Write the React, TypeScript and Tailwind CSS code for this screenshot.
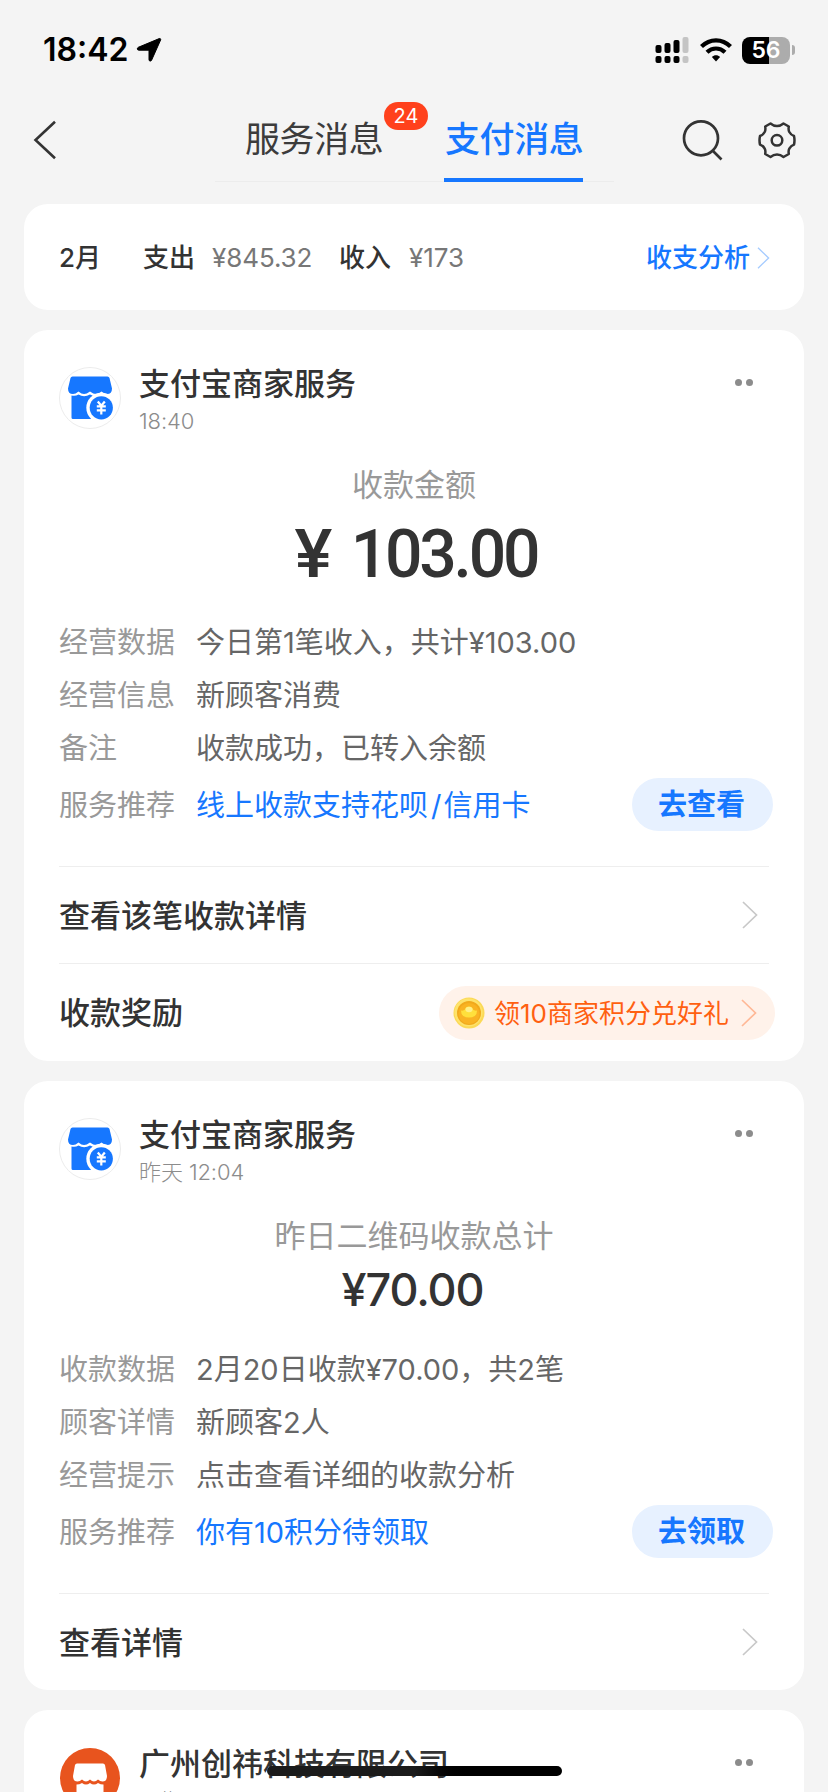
import React from 'react';

type Row = { label: string; value: React.ReactNode; action?: string };

const paymentRows: Row[] = [
  { label: '经营数据', value: '今日第1笔收入，共计¥103.00' },
  { label: '经营信息', value: '新顾客消费' },
  { label: '备注', value: '收款成功，已转入余额' },
  {
    label: '服务推荐',
    value: (
      <>
        线上收款支持花呗<span className="mr-[2px] ml-[3px]">/</span>信用卡
      </>
    ),
    action: '去查看',
  },
];

const dailyRows: Row[] = [
  { label: '收款数据', value: '2月20日收款¥70.00，共2笔' },
  { label: '顾客详情', value: '新顾客2人' },
  { label: '经营提示', value: '点击查看详细的收款分析' },
  { label: '服务推荐', value: '你有10积分待领取', action: '去领取' },
];

const Chevron = ({ className }: { className: string }) => (
  <svg viewBox="0 0 16 28" fill="none" stroke="currentColor" strokeWidth="1.7" className={className}>
    <path d="M1 1L14.5 14L1 27" />
  </svg>
);

const StatusBar = () => (
  <div className="flex h-[100px] items-center justify-between pl-[43px] pr-[33px]">
    <div className="flex items-center">
      <span className="w-[86px] text-[32px] leading-none font-semibold text-black">18:42</span>
      <svg viewBox="0 0 26 26" className="ml-[7px] h-[26px] w-[26px]">
        <path
          d="M23.2 1.6C24.2 1.2 25 2 24.6 3L15.6 23.2C15 24.6 13 24.3 13 22.8V13.2H2.8C1 13.2.8 10.9 2.3 10.3Z"
          fill="#000"
          stroke="#000"
          strokeLinejoin="round"
        />
      </svg>
    </div>
    <div className="flex items-center">
      <svg viewBox="0 0 34 28" className="h-7 w-[34px]">
        <g fill="#000">
          <rect x="0.5" y="9" width="6" height="8" rx="2" />
          <rect x="9.5" y="7" width="6" height="10" rx="2" />
          <rect x="18.5" y="4" width="6" height="13" rx="2" />
          <rect x="0.5" y="20" width="6" height="7" rx="2" />
          <rect x="9.5" y="20" width="6" height="7" rx="2" />
          <rect x="18.5" y="20" width="6" height="7" rx="2" />
        </g>
        <g fill="#c4c4c4">
          <rect x="27.5" y="1" width="6" height="16" rx="2" />
          <rect x="27.5" y="20" width="6" height="7" rx="2" />
        </g>
      </svg>
      <svg viewBox="0 0 32 24" fill="none" stroke="#000" strokeWidth="4.2" className="ml-[11px] h-6 w-8">
        <path d="M1.5 8.6C9.8.3 22.2.3 30.5 8.6" />
        <path d="M7 14.3C12.2 9.2 19.8 9.2 25 14.3" />
        <path d="M11.9 18.9C14.2 16.6 17.8 16.6 20.1 18.9L16 23.4Z" fill="#000" stroke="none" />
      </svg>
      <div className="ml-[10px] flex items-center">
        <div className="flex h-[27px] w-12 items-center justify-center rounded-[8px] bg-linear-to-r from-black from-56% to-[#acacac] to-56%">
          <span className="text-[23px] leading-none font-semibold text-white">56</span>
        </div>
        <div className="ml-[2px] h-[10px] w-[3px] rounded-r-full bg-[#acacac]" />
      </div>
    </div>
  </div>
);

const Header = () => (
  <div className="flex h-[104px] items-start pl-[33px]">
    <svg viewBox="0 0 24 40" fill="none" stroke="#333" strokeWidth="2.6" className="mt-5 h-10 w-6">
      <path d="M22 1.8L2.5 20L22 38.2" />
    </svg>
    <div className="ml-[158px] flex h-[82px] w-[399px] border-b border-[#ececec] pl-[30px] whitespace-nowrap">
      <div className="relative w-[140px] pt-[16px] text-[35px] leading-[46px] tracking-[-0.4px] text-[#3c3c3c]">
        服务消息
        <span className="absolute top-[2px] left-[139px] flex h-7 w-11 items-center justify-center rounded-full bg-[#ff411c] text-[20px] leading-none tracking-normal text-white">
          24
        </span>
      </div>
      <div className="ml-[59px] h-[82px] w-[139px] border-b-4 border-[#1677ff] pt-[16px] pl-px text-[35px] leading-[46px] font-medium tracking-[-0.4px] text-[#1677ff]">
        支付消息
      </div>
    </div>
    <svg viewBox="0 0 42 42" fill="none" stroke="#333" strokeWidth="2.7" className="mt-[19px] ml-[68px] h-[42px] w-[42px]">
      <circle cx="19" cy="19.3" r="17" />
      <path d="M30.5 31.5L39.5 40.5" />
    </svg>
    <svg viewBox="0 0 40 40" fill="none" stroke="#333" strokeWidth="2.5" strokeLinejoin="round" className="mt-5 ml-[33px] h-10 w-10">
      <path d="M13.5 3.5Q16.5 6 20 6Q23.500 6 26.500 3.500L31.800 6.500Q31.200 10 32.300 12Q34 15 37 16Q38 20.300 37 24.600Q34 25.600 32.300 28.600Q31.200 30.600 31.800 34L26.500 37Q23.500 34.600 20 34.600Q16.500 34.600 13.500 37L8.200 34Q8.800 30.600 7.700 28.600Q6 25.600 3 24.600Q2 20.300 3 16Q6 15 7.700 12Q8.800 10 8.200 6.500Z" />
      <circle cx="20" cy="20.3" r="5.3" />
    </svg>
  </div>
);

const Summary = () => (
  <div className="flex h-[106px] items-center rounded-3xl bg-white pt-[2px] pr-[34px] pl-[35px] text-[26px] leading-none text-[#333]">
    <span className="w-[84px] font-medium">2月</span>
    <span className="font-medium">支出</span>
    <span className="ml-[17px] w-[110px] tracking-[-0.1px] text-[#777]">¥845.32</span>
    <span className="ml-[17px] font-medium">收入</span>
    <span className="ml-[18px] tracking-[-0.1px] text-[#777]">¥173</span>
    <span className="ml-auto font-medium text-[#1677ff]">收支分析</span>
    <Chevron className="ml-[7px] h-[22px] w-[13px] text-[#a5cbff]" />
  </div>
);

const ShopAvatar = () => (
  <svg viewBox="0 0 62 62" className="h-[62px] w-[62px] shrink-0">
    <circle cx="31" cy="31" r="30.5" fill="#fff" stroke="#ececec" />
    <path
      d="M13.5 9.5H48.5Q50 9.5 50.5 11L53 21.5Q53 27 48 27Q45.5 27 42.5 24.5Q39.5 27 37 27Q34.5 27 31 24.5Q27.5 27 25 27Q22.5 27 19.5 24.5Q16.5 27 14 27Q9 27 9 21.5L11.5 11Q12 9.5 13.5 9.5Z"
      fill="#1677ff"
    />
    <path d="M12.5 28.5Q16.5 29.5 19.5 27.5Q25 31 31 27.5Q37 31 42.5 27.5Q46 29.5 49.5 28.5V52H14Q12.5 52 12.5 50.5Z" fill="#1677ff" />
    <circle cx="42.3" cy="40.8" r="15" fill="#fff" />
    <circle cx="42.3" cy="40.8" r="11.6" fill="#1677ff" />
    <path d="M38.8 34.5L42.3 38.8L45.8 34.5M42.3 38.5V47.5M37.8 39.3H46.8M37.8 43.3H46.8" fill="none" stroke="#fff" strokeWidth="2.2" />
  </svg>
);

const CompanyAvatar = () => (
  <svg viewBox="0 0 62 62" className="h-[62px] w-[62px] shrink-0">
    <circle cx="31" cy="31" r="30" fill="#e8541e" />
    <path
      d="M18 16.5H44Q45.5 16.5 46 18L48 29Q48 34.5 43.5 34.5Q41 34.5 39 32.5Q37 34.5 35 34.5Q33 34.5 31 32.5Q29 34.5 27 34.5Q25 34.5 23 32.5Q21 34.5 18.5 34.5Q14 34.5 14 29L16 18Q16.5 16.5 18 16.5Z"
      fill="#fff"
    />
    <path d="M17.5 37.5Q20.5 37.5 23 36Q27 39 31 36Q35 39 39 36Q41.5 37.5 44.5 37.5V51H17.5Z" fill="#fff" />
  </svg>
);

const CardHeader = ({ avatar, title, time }: { avatar: React.ReactNode; title: string; time: string }) => (
  <div className="flex h-[108px] pt-[37px]">
    {avatar}
    <div className="ml-[18px] whitespace-nowrap">
      <div className="mt-[-4px] text-[31px] leading-[42px] font-medium text-[#333]">{title}</div>
      <div className="mt-[2px] text-[22px] leading-[28px] font-light tracking-[-0.1px] text-[#8c8c8c]">{time}</div>
    </div>
    <div className="mt-[12px] mr-[16px] ml-auto flex gap-1">
      <i className="h-[7px] w-[7px] rounded-full bg-[#8c8c8c]" />
      <i className="h-[7px] w-[7px] rounded-full bg-[#8c8c8c]" />
    </div>
  </div>
);

const InfoRows = ({ rows }: { rows: Row[] }) => (
  <div className="text-[29px] leading-[55px] whitespace-nowrap">
    {rows.map((row) => (
      <div key={row.label} className={row.action ? 'mt-[4px] flex h-[53px]' : 'flex h-[53px]'}>
        <span className="w-[137px] text-[#999]">{row.label}</span>
        <span className={row.action ? 'text-[#1677ff]' : 'text-[#666]'}>{row.value}</span>
        {row.action && (
          <button className="mr-[-4px] ml-auto h-[53px] w-[141px] rounded-full bg-[#e7f1ff] pr-[2px] text-center leading-[54px] font-bold text-[#1677ff]">
            {row.action}
          </button>
        )}
      </div>
    ))}
  </div>
);

const LinkRow = ({ label, children }: { label: string; children?: React.ReactNode }) => (
  <div className="flex h-[97px] items-center border-t border-[#eee]">
    <span className="text-[31px] leading-none font-medium text-[#333]">{label}</span>
    {children || <Chevron className="mr-[11px] ml-auto h-7 w-4 text-[#c8c8c8]" />}
  </div>
);

const Coin = () => (
  <svg viewBox="0 0 32 32" className="h-8 w-8">
    <circle cx="16" cy="16" r="15.5" fill="#fbd956" />
    <circle cx="15.5" cy="15.5" r="14" fill="#fee36c" />
    <circle cx="16" cy="16" r="12" fill="#f1a91c" />
    <circle cx="16" cy="16.500" r="10.5" fill="#f9b323" />
    <path d="M8 13.500Q10.500 14 12 12.500Q12.500 9.500 16 9.500Q19.500 9.500 20 12.500Q21.500 14 24 13.500Q24 20.500 16 20.500Q8 20.500 8 13.500Z" fill="#ffe03c" />
    <ellipse cx="16" cy="12.500" rx="3.500" ry="2.800" fill="#fff08a" />
  </svg>
);

const Card = ({ children }: { children: React.ReactNode }) => (
  <div className="rounded-3xl bg-white px-[35px]">{children}</div>
);

export default function App() {
  return (
    <div className="relative h-[1792px] w-[828px] overflow-hidden bg-[#f4f4f4] font-['Inter','Noto_Sans_CJK_SC',sans-serif]">
      <StatusBar />
      <Header />
      <div className="flex flex-col gap-5 px-6">
        <Summary />

        <Card>
          <CardHeader avatar={<ShopAvatar />} title="支付宝商家服务" time="18:40" />
          <div className="pt-[24px] text-center text-[31px] leading-[46px] text-[#999]">收款金额</div>
          <div className="flex h-[107px] justify-center gap-[20px] pt-[8px] pl-[5px] font-['Roboto'] text-[66px] leading-[78px] font-medium text-[#333]">
            <span className="scale-x-108">¥</span>
            <span className="tracking-[-3.2px]">103.00</span>
          </div>
          <InfoRows rows={paymentRows} />
          <div className="pt-[35px]">
            <LinkRow label="查看该笔收款详情" />
            <div className="pb-px">
              <LinkRow label="收款奖励">
                <div className="mt-[2px] mr-[-6px] ml-auto flex h-[54px] w-[336px] items-center rounded-full bg-[#fff2ea] pl-[14px] text-[26px] leading-none whitespace-nowrap text-[#ff6010]">
                  <Coin />
                  <span className="mt-[2px] ml-[9px]">领10商家积分兑好礼</span>
                  <Chevron className="mr-[18px] ml-auto h-7 w-4 text-[#ffb896]" />
                </div>
              </LinkRow>
            </div>
          </div>
        </Card>

        <Card>
          <CardHeader avatar={<ShopAvatar />} title="支付宝商家服务" time="昨天 12:04" />
          <div className="pt-[24px] text-center text-[31px] leading-[46px] text-[#999]">昨日二维码收款总计</div>
          <div className="h-[83px] pt-px pr-[3px] text-center text-[45px] leading-[60px] font-medium tracking-[-1.1px] text-[#333]">
            ¥70.00
          </div>
          <InfoRows rows={dailyRows} />
          <div className="pt-[35px]">
            <LinkRow label="查看详情" />
          </div>
        </Card>

        <Card>
          <CardHeader avatar={<CompanyAvatar />} title="广州创祎科技有限公司" time="星期一" />
        </Card>
      </div>
      <div className="absolute top-[1766px] left-[267px] h-[10px] w-[295px] rounded-full bg-linear-to-r from-[#1b1b1b] from-50% to-black to-70%" />
    </div>
  );
}
